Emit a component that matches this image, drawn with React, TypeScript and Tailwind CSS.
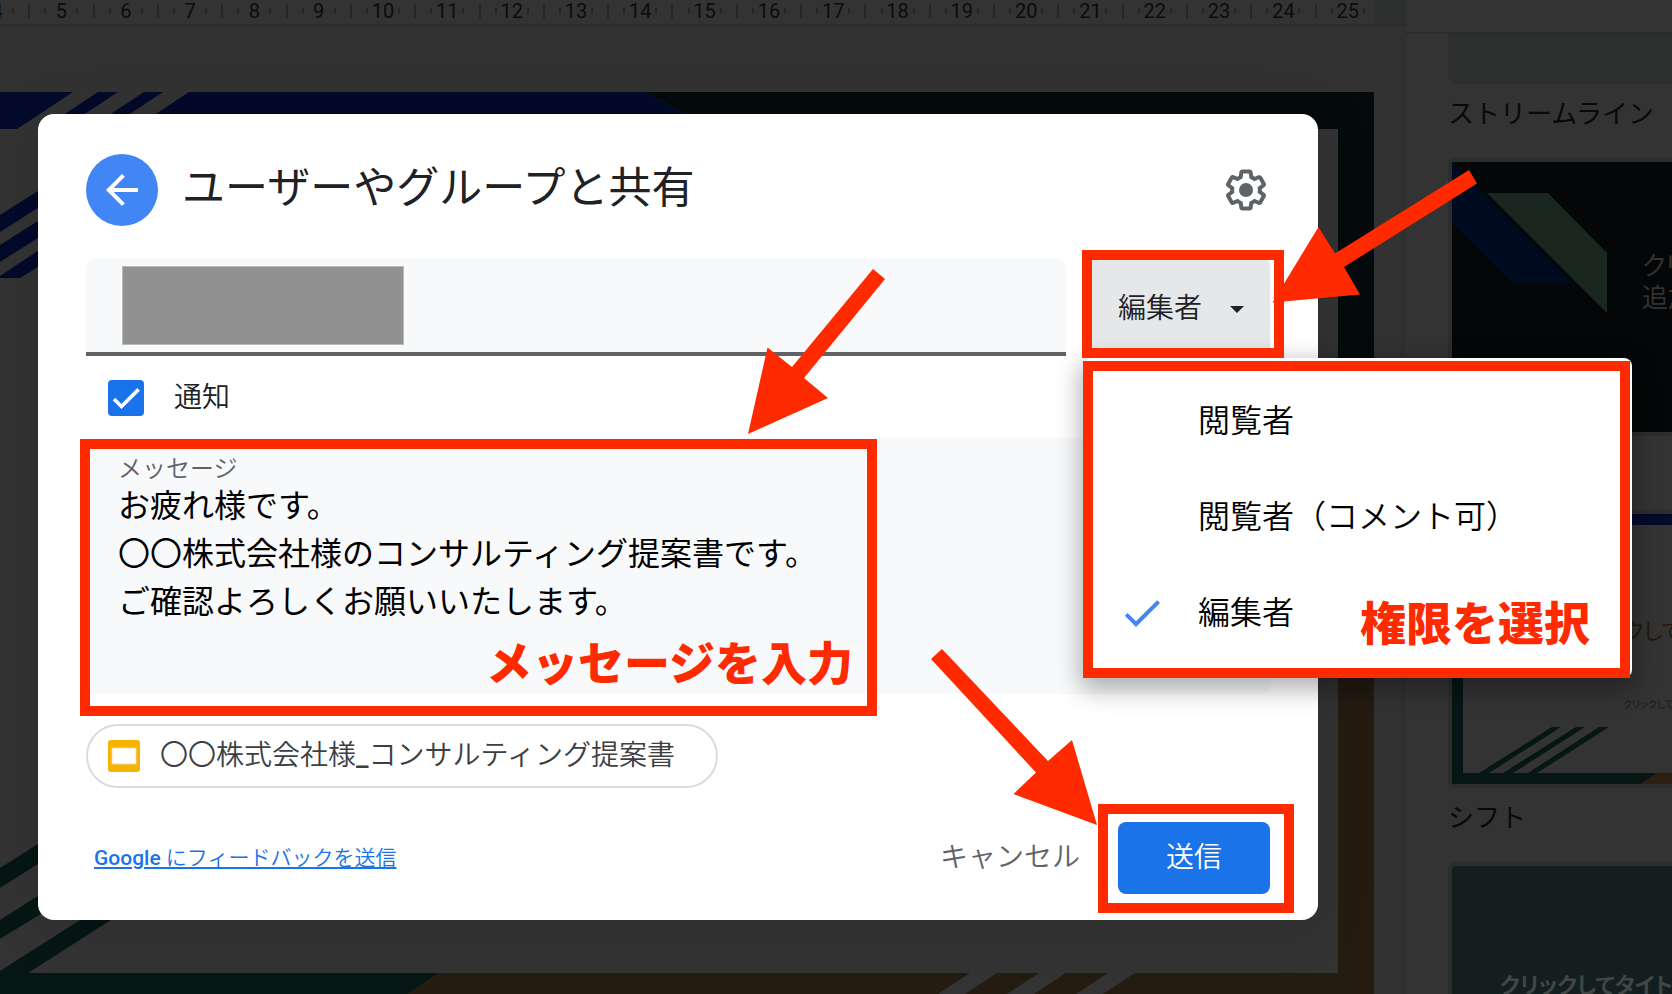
import { useState } from "react";
import clsx from "clsx";

const roles = ["閲覧者", "閲覧者（コメント可）", "編集者"];

const defaultMessage = [
  "お疲れ様です。",
  "〇〇株式会社様のコンサルティング提案書です。",
  "ご確認よろしくお願いいたします。",
].join("\n");

const rulerNumbers = Array.from({ length: 22 }, (_, i) => i + 4);

function Ruler() {
  return (
    <div className="flex h-[26px] shrink-0 border-b-2 border-[#2c2c2c] bg-[#2d2f2e]">
      <div className="mr-8 flex-1 overflow-hidden bg-[#333333]">
        <div className="-ml-[34px] -mr-[7px] flex h-[22px] items-center">
          {rulerNumbers.map((n) => (
            <div key={n} className="flex flex-1 items-center">
              <div className="flex flex-1 items-center justify-center">
                <span className="h-1.5 w-0.5 bg-[#262626]" />
                <span className="w-[30px] text-center text-xl leading-[22px] text-[#0b0c0c]">
                  {n}
                </span>
                <span className="h-1.5 w-0.5 bg-[#262626]" />
              </div>
              <span className="h-3.5 w-0.5 bg-[#262626]" />
            </div>
          ))}
        </div>
      </div>
    </div>
  );
}

function Slide() {
  return (
    <svg viewBox="0 92 1374 902" className="w-full" aria-hidden="true">
      <rect x="0" y="92" width="1374" height="902" fill="#333333" />
      {/* top frame */}
      <path d="M645 92H1374V520H1338V129H714Z" fill="#050b0d" />
      <path d="M189 92H645L714 129H133Z" fill="#030a2a" />
      <path d="M0 92H73L17 129H0Z" fill="#030a2a" />
      <path d="M98 92H118L62 129H42Z" fill="#030a2a" />
      <path d="M144 92H163L107 129H88Z" fill="#030a2a" />
      {/* left stripes */}
      <path d="M0 215L60 177V194L0 232Z" fill="#030a2a" />
      <path d="M0 245L60 207V224L0 262Z" fill="#030a2a" />
      <path d="M0 276L60 236V253L20 278H0Z" fill="#030a2a" />
      {/* bottom left */}
      <path d="M0 868L60 830V850L0 888Z" fill="#051614" />
      <path d="M0 920L60 882V902L0 939Z" fill="#051614" />
      <path d="M0 971L80 920H111L28 973H438L408 994H0Z" fill="#051614" />
      {/* bottom right */}
      <path
        d="M438 973H970L938 994H408ZM997 973H1039L1007 994H965ZM1066 973H1108L1076 994H1034ZM1135 973H1338V520H1374V994H1103Z"
        fill="#241b11"
      />
    </svg>
  );
}

function ThemePanel() {
  return (
    <aside className="flex w-[266px] shrink-0 flex-col overflow-hidden bg-[#333333] text-[26px] leading-8 text-[#090909]">
      <div className="h-[34px] shrink-0 border-b-2 border-[#2c2c2c]" />
      <div className="flex flex-col pl-[42px]">
        <div className="h-[50px] rounded-bl-lg border-b-4 border-l-4 border-[#2c2e30] bg-[#2d2f2e]" />
        <p className="mt-3.5 whitespace-nowrap">ストリームライン</p>
        <div className="mt-7 flex h-[278px] rounded-l-lg border-y-4 border-l-4 border-[#2b2d2f] bg-[#050607]">
          <svg
            viewBox="0 0 170 270"
            className="w-[170px] shrink-0"
            aria-hidden="true"
          >
            <path d="M0 0L121 121H60L0 61Z" fill="#010b20" />
            <path d="M35 31H96L155 91V151Z" fill="#1a2620" />
          </svg>
          <p className="ml-[20px] mt-[88px] h-16 w-20 shrink-0 text-[#303131] [font-feature-settings:'palt']">
            クリッ
            <br />
            追加
          </p>
        </div>
        <div className="relative mt-[74px] h-[278px] rounded-l-lg border-y-4 border-l-4 border-[#2b2d2f]">
          <svg
            viewBox="0 0 220 270"
            className="h-[270px] w-[220px]"
            aria-hidden="true"
          >
            <rect width="220" height="270" fill="#333333" />
            <rect width="220" height="11" fill="#030a2a" />
            <path
              d="M0 11H11V259H205L189 270H0ZM100 213H109L37 259H27ZM124 213H133L61 259H51ZM147 213H157L85 259H76Z"
              fill="#051614"
            />
            <path d="M205 259H220V270H189Z" fill="#2a1f10" />
          </svg>
          <p className="absolute left-[172px] top-[102px] whitespace-nowrap text-[22px] text-[#241a0c] [font-feature-settings:'palt']">
            クして
          </p>
          <p className="absolute left-[171px] top-[175px] whitespace-nowrap text-[10px] text-[#1f1a10] [font-feature-settings:'palt']">
            クリックして
          </p>
        </div>
        <p className="mt-3.5">シフト</p>
        <div className="mt-7 h-[278px] rounded-l-lg border-y-4 border-l-4 border-[#2b2d2f] bg-[#121f1e] pl-12 pt-[104px]">
          <p className="whitespace-nowrap text-[22px] font-bold text-[#3f4746] [font-feature-settings:'palt']">
            クリックしてタイトル
          </p>
        </div>
      </div>
    </aside>
  );
}

function Editor() {
  return (
    <div className="flex h-screen overflow-hidden">
      <div className="flex flex-1 flex-col overflow-hidden">
        <Ruler />
        <div className="flex-1 overflow-hidden border-r-[6px] border-[#2f3030] bg-[#313231] pr-[26px] pt-[66px]">
          <Slide />
        </div>
      </div>
      <ThemePanel />
    </div>
  );
}

function Highlight({ className }: { className: string }) {
  return (
    <div
      className={clsx(
        "pointer-events-none absolute border-10 border-[#ff2a00]",
        className
      )}
    />
  );
}

function RolePicker() {
  const [role, setRole] = useState("編集者");
  const [open, setOpen] = useState(true);

  return (
    <div className="relative">
      <button
        type="button"
        aria-haspopup="listbox"
        aria-expanded={open}
        onClick={() => setOpen(!open)}
        className="flex h-full w-[180px] items-center gap-7 rounded-lg bg-[#e6e7e9] pl-7 pt-1 text-[28px] font-[350] text-[#202124]"
      >
        {role}
        <svg viewBox="0 0 14 7" className="h-[7px] w-3.5" aria-hidden="true">
          <path d="M0 0H14L7 7Z" fill="#202124" />
        </svg>
      </button>
      {open && (
        <div className="absolute -left-1.5 top-full mt-0.5 w-[548px] rounded-lg bg-white pb-[17px] pt-[15px] shadow-[0_8px_24px_4px_rgba(0,0,0,0.3)]">
          <ul role="listbox" aria-label="権限">
            {roles.map((r) => (
              <li
                key={r}
                role="option"
                aria-selected={r === role}
                onClick={() => setRole(r)}
                className="flex h-24 cursor-pointer items-center gap-8 pl-[34px] text-[32px] leading-[48px] font-[350] text-black"
              >
                <span className="size-12">
                  {r === role && (
                    <svg viewBox="0 0 24 24" aria-hidden="true">
                      <path
                        d="M9 16.17L4.83 12l-1.42 1.41L9 19 21 7l-1.41-1.41z"
                        fill="#4285f4"
                      />
                    </svg>
                  )}
                </span>
                {r}
              </li>
            ))}
          </ul>
          <p className="absolute bottom-5 right-[42px] text-[46px] leading-[68px] font-black text-[#ff2a00]">
            権限を選択
          </p>
          <Highlight className="-left-px bottom-0 right-0.5 top-[3px]" />
        </div>
      )}
      <Highlight className="-bottom-0.5 -left-2 -right-3.5 -top-2" />
    </div>
  );
}

function SlidesIcon() {
  return (
    <svg viewBox="0 0 32 32" className="size-8" aria-hidden="true">
      <rect width="32" height="32" rx="3" fill="#f5b400" />
      <rect
        x="4"
        y="8"
        width="24"
        height="16"
        fill="#ffffff"
        stroke="#fbd5a8"
      />
    </svg>
  );
}

function ShareDialog() {
  const [notify, setNotify] = useState(true);
  const [message, setMessage] = useState(defaultMessage);

  return (
    <div
      role="dialog"
      aria-labelledby="share-title"
      className="flex-1 rounded-2xl bg-white px-12 pb-[26px] pt-10 shadow-[0_4px_60px_rgba(0,0,0,0.12)]"
    >
      <header className="flex items-center">
        <button
          type="button"
          aria-label="戻る"
          className="flex size-[72px] items-center justify-center rounded-full bg-[#4285f4]"
        >
          <svg viewBox="0 0 24 24" className="size-12" aria-hidden="true">
            <path
              d="M20 11H7.83l5.59-5.59L12 4l-8 8 8 8 1.41-1.41L7.83 13H20v-2z"
              fill="#ffffff"
            />
          </svg>
        </button>
        <h1
          id="share-title"
          className="ml-6 flex-1 pb-1 text-[43px] leading-[64px] text-[#202124]"
        >
          ユーザーやグループと共有
        </h1>
        <button type="button" aria-label="設定">
          <svg viewBox="0 0 24 24" className="size-12" aria-hidden="true">
            <path
              d="M13.85 22.25h-3.7c-.74 0-1.36-.54-1.45-1.27l-.27-1.89c-.27-.14-.53-.29-.79-.46l-1.8.72c-.7.26-1.47-.03-1.81-.65L2.2 15.53c-.35-.66-.2-1.44.36-1.88l1.53-1.19c-.01-.15-.02-.3-.02-.46 0-.15.01-.31.02-.46l-1.52-1.19c-.59-.45-.74-1.26-.37-1.88l1.85-3.19c.34-.62 1.11-.9 1.79-.63l1.81.73c.26-.17.52-.32.78-.46l.27-1.91c.09-.7.71-1.25 1.44-1.25h3.7c.74 0 1.36.54 1.45 1.27l.27 1.89c.27.14.53.29.79.46l1.8-.72c.71-.26 1.48.03 1.82.65l1.84 3.18c.36.66.2 1.44-.36 1.88l-1.52 1.19c.01.15.02.3.02.46s-.01.31-.02.46l1.52 1.19c.56.45.72 1.23.37 1.86l-1.86 3.22c-.34.62-1.11.9-1.8.63l-1.8-.72c-.26.17-.52.32-.78.46l-.27 1.91c-.1.68-.72 1.22-1.46 1.22zm-3.23-2h2.76l.37-2.55.53-.22c.44-.18.88-.44 1.34-.78l.45-.34 2.38.96 1.38-2.4-2.03-1.58.07-.56c.03-.26.06-.51.06-.78s-.03-.53-.06-.78l-.07-.56 2.03-1.58-1.39-2.4-2.39.96-.45-.35c-.42-.32-.87-.58-1.33-.77l-.52-.22-.37-2.55h-2.76l-.37 2.55-.53.21c-.44.19-.88.44-1.34.79l-.45.33-2.38-.95-1.39 2.39 2.03 1.58-.07.56a7 7 0 0 0-.06.79c0 .26.02.53.06.78l.07.56-2.03 1.58 1.38 2.4 2.39-.96.45.35c.43.33.86.58 1.33.77l.53.22.38 2.55z"
              fill="#5f6368"
            />
            <circle cx="12" cy="12" r="3.5" fill="#5f6368" />
          </svg>
        </button>
      </header>

      <div className="relative z-10 mt-8 flex gap-6">
        <div className="flex h-[98px] flex-1 rounded-t-xl border-b-4 border-[#606266] bg-[#f8f9fb] pl-9 pt-2">
          <div className="h-[79px] w-[282px] border border-[#b9baba] bg-[#919191]" />
          <input
            type="text"
            aria-label="ユーザーやグループを追加"
            className="flex-1 bg-transparent outline-none"
          />
        </div>
        <RolePicker />
      </div>

      <label className="ml-[22px] mt-6 flex h-9 w-fit items-center gap-[30px] text-[28px] font-[350] text-[#202124]">
        <span className="relative size-9">
          <input
            type="checkbox"
            checked={notify}
            onChange={(e) => setNotify(e.target.checked)}
            className="block size-9 appearance-none rounded border-2 border-[#5f6368] checked:border-[#1a73e8] checked:bg-[#1a73e8]"
          />
          {notify && (
            <svg
              viewBox="0 0 24 24"
              className="pointer-events-none absolute inset-1 size-7"
              aria-hidden="true"
            >
              <path
                d="M1.73 12.91L8.1 19.28 22.79 4.59"
                fill="none"
                stroke="#ffffff"
                strokeWidth="3.1"
              />
            </svg>
          )}
        </span>
        通知
      </label>

      <div className="relative mt-[22px] rounded-lg bg-[#f8f9fb] px-8 pb-5 pt-[18px]">
        <label
          htmlFor="share-message"
          className="block text-2xl leading-[26px] font-[350] text-[#5f6368]"
        >
          メッセージ
        </label>
        <textarea
          id="share-message"
          rows={4}
          value={message}
          onChange={(e) => setMessage(e.target.value)}
          className="block w-full resize-none overflow-hidden bg-transparent text-[32px] leading-[48px] text-black outline-none"
        />
        <p className="absolute -bottom-1 left-[400px] text-[46px] leading-[68px] font-black text-[#ff2a00]">
          メッセージを入力
        </p>
        <Highlight className="-bottom-[22px] -left-1.5 top-px w-[797px]" />
      </div>

      <div className="mt-[30px] flex h-16 w-[632px] items-center gap-5 rounded-full border-2 border-[#dadce0] pl-5 text-[28px] font-[350] text-[#3c4043]">
        <SlidesIcon />
        <span className="whitespace-nowrap">
          〇〇株式会社様<span className="font-medium">_</span>
          コンサルティング提案書
        </span>
      </div>

      <footer className="mt-[34px] flex items-center">
        <a
          href="#feedback"
          className="ml-2 text-[21px] leading-8 font-medium text-[#1a73e8] underline decoration-2 underline-offset-2"
        >
          Google <span className="font-[350]">にフィードバックを送信</span>
        </a>
        <button
          type="button"
          className="ml-auto mr-[38px] text-[28px] font-[350] text-[#5f6368]"
        >
          キャンセル
        </button>
        <div className="relative">
          <button
            type="button"
            className="block h-[72px] w-[152px] rounded-lg bg-[#1a73e8] text-[28px] font-[350] text-white"
          >
            送信
          </button>
          <Highlight className="-bottom-[19px] -left-5 -right-6 -top-[18px]" />
        </div>
      </footer>
    </div>
  );
}

function Arrows() {
  return (
    <svg
      width="1672"
      height="994"
      viewBox="0 0 1672 994"
      className="pointer-events-none absolute left-0 top-0 z-20"
      aria-hidden="true"
    >
      <g fill="#ff2a00">
        <path d="M873 269L885 279L804 378L828 398L748 434L767.5 347.5L792 367Z" />
        <path d="M1469 170L1477 183.5L1344 267L1360 294.5L1272.5 302.5L1318.5 227L1335 253.5Z" />
        <path d="M942 649L1048 761L1072 740L1097 825L1013.5 794L1036 772.5L931 659Z" />
      </g>
    </svg>
  );
}

export default function App() {
  return (
    <div className="relative min-h-screen overflow-hidden bg-[#333333] font-['Roboto','Noto_Sans_CJK_JP',sans-serif]">
      <Editor />
      <div className="absolute inset-0 flex items-start pl-[38px] pr-[354px] pt-[114px]">
        <ShareDialog />
      </div>
      <Arrows />
    </div>
  );
}
